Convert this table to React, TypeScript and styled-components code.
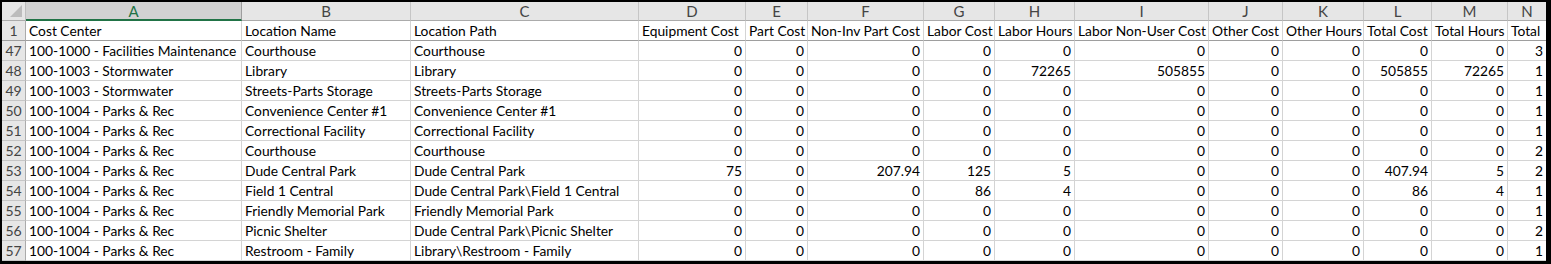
import React from 'react';
import styled, { createGlobalStyle } from 'styled-components';

const GlobalStyle = createGlobalStyle`
  html, body {
    margin: 0;
    padding: 0;
    background: #ffffff;
  }
`;

const COLS = [24, 216, 169, 228, 107, 62, 116, 71, 80, 134, 74, 81, 68, 76, 39];
const LETTERS = ['A', 'B', 'C', 'D', 'E', 'F', 'G', 'H', 'I', 'J', 'K', 'L', 'M', 'N'];

const HEADERS = [
  'Cost Center',
  'Location Name',
  'Location Path',
  'Equipment Cost',
  'Part Cost',
  'Non-Inv Part Cost',
  'Labor Cost',
  'Labor Hours',
  'Labor Non-User Cost',
  'Other Cost',
  'Other Hours',
  'Total Cost',
  'Total Hours',
  'Total',
];

type Row = [number, string, string, string, ...(number | string)[]];

const zeros = (total: number): (number | string)[] => [0, 0, 0, 0, 0, 0, 0, 0, 0, 0, total];

const ROWS: Row[] = [
  [47, '100-1000 - Facilities Maintenance', 'Courthouse', 'Courthouse', ...zeros(3)],
  [48, '100-1003 - Stormwater', 'Library', 'Library', 0, 0, 0, 0, 72265, 505855, 0, 0, 505855, 72265, 1],
  [49, '100-1003 - Stormwater', 'Streets-Parts Storage', 'Streets-Parts Storage', ...zeros(1)],
  [50, '100-1004 - Parks & Rec', 'Convenience Center #1', 'Convenience Center #1', ...zeros(1)],
  [51, '100-1004 - Parks & Rec', 'Correctional Facility', 'Correctional Facility', ...zeros(1)],
  [52, '100-1004 - Parks & Rec', 'Courthouse', 'Courthouse', ...zeros(2)],
  [53, '100-1004 - Parks & Rec', 'Dude Central Park', 'Dude Central Park', 75, 0, '207.94', 125, 5, 0, 0, 0, '407.94', 5, 2],
  [54, '100-1004 - Parks & Rec', 'Field 1 Central', 'Dude Central Park\\Field 1 Central', 0, 0, 0, 86, 4, 0, 0, 0, 86, 4, 1],
  [55, '100-1004 - Parks & Rec', 'Friendly Memorial Park', 'Friendly Memorial Park', ...zeros(1)],
  [56, '100-1004 - Parks & Rec', 'Picnic Shelter', 'Dude Central Park\\Picnic Shelter', ...zeros(2)],
  [57, '100-1004 - Parks & Rec', 'Restroom - Family', 'Library\\Restroom - Family', ...zeros(1)],
];

const Frame = styled.div`
  width: 1551px;
  height: 264px;
  box-sizing: border-box;
  border-style: solid;
  border-color: #000000;
  border-width: 2px 5px 3px 2px;
  overflow: hidden;
  background: #ffffff;
`;

const Sheet = styled.div`
  display: grid;
  grid-template-columns: ${COLS.map((w) => `${w}px`).join(' ')};
  grid-template-rows: 19px repeat(12, 20px);
  font-family: Lato, 'Liberation Sans', sans-serif;
  font-size: 13.8px;
  color: #000000;
`;

const Corner = styled.div`
  position: relative;
  background: #e6e6e6;
  border-right: 1px solid #bdbdbd;
  border-bottom: 1px solid #ababab;
  box-sizing: border-box;

  &::after {
    content: '';
    position: absolute;
    right: 3px;
    bottom: 3px;
    width: 0;
    height: 0;
    border-style: solid;
    border-width: 0 0 12px 12px;
    border-color: transparent transparent #bcbcbc transparent;
  }
`;

const ColHead = styled.div<{ $selected?: boolean }>`
  display: flex;
  align-items: center;
  justify-content: center;
  box-sizing: border-box;
  background: ${(p) => (p.$selected ? '#d2d2d2' : '#e6e6e6')};
  color: ${(p) => (p.$selected ? '#217346' : '#444444')};
  border-right: 1px solid ${(p) => (p.$selected ? '#9e9e9e' : '#c6c6c6')};
  border-bottom: ${(p) => (p.$selected ? '2px solid #217346' : '1px solid #ababab')};
  font-size: 15px;
  line-height: 1;
  padding-top: ${(p) => (p.$selected ? '1px' : '0')};
`;

const RowHead = styled.div<{ $frozen?: boolean }>`
  display: flex;
  align-items: center;
  justify-content: center;
  box-sizing: border-box;
  background: #e6e6e6;
  color: #444444;
  font-size: 14px;
  border-right: 1px solid #ababab;
  border-bottom: 1px solid ${(p) => (p.$frozen ? '#9e9e9e' : '#c6c6c6')};
`;

const Cell = styled.div<{ $num?: boolean; $frozen?: boolean }>`
  display: flex;
  align-items: center;
  justify-content: ${(p) => (p.$num ? 'flex-end' : 'flex-start')};
  box-sizing: border-box;
  padding: 0 3px;
  white-space: nowrap;
  overflow: hidden;
  border-right: 1px solid #d4d4d4;
  border-bottom: 1px solid ${(p) => (p.$frozen ? '#9e9e9e' : '#d4d4d4')};
`;

export default function App() {
  return (
    <>
      <GlobalStyle />
      <Frame>
        <Sheet>
          <Corner />
          {LETTERS.map((l) => (
            <ColHead key={l} $selected={l === 'A'}>
              {l}
            </ColHead>
          ))}

          <RowHead $frozen>1</RowHead>
          {HEADERS.map((h) => (
            <Cell key={h} $frozen>
              {h}
            </Cell>
          ))}

          {ROWS.map(([n, ...cells]) => (
            <React.Fragment key={n}>
              <RowHead>{n}</RowHead>
              {cells.map((v, i) => (
                <Cell key={i} $num={i >= 3}>
                  {v}
                </Cell>
              ))}
            </React.Fragment>
          ))}
        </Sheet>
      </Frame>
    </>
  );
}
